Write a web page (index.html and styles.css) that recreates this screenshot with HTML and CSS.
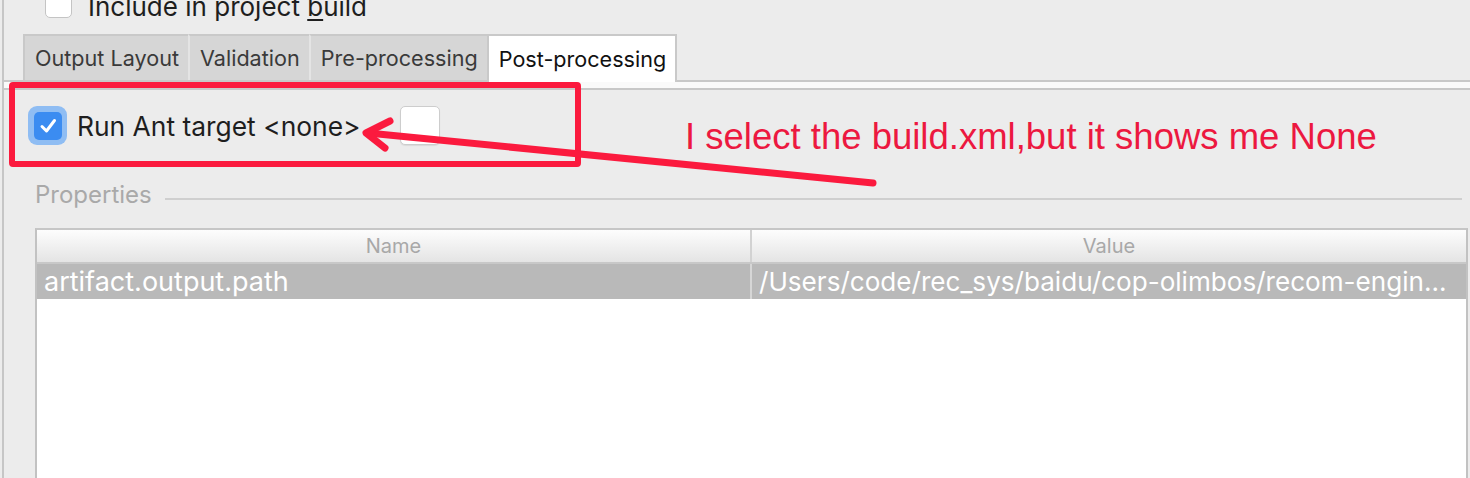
FILE: index.html
```html
<!DOCTYPE html>
<html>
<head>
<meta charset="utf-8">
<link rel="stylesheet" href="styles.css">
</head>
<body>
<div class="page">
  <div class="frame">
    <div class="top-row">
      <span class="cb-plain"></span>
      <span class="lbl top-lbl">Include in project <u>b</u>uild</span>
    </div>
    <div class="tabs">
      <div class="tab first">Output Layout</div>
      <div class="tab">Validation</div>
      <div class="tab">Pre-processing</div>
      <div class="tab active">Post-processing</div>
    </div>
    <div class="strip"></div>
    <div class="panel">
      <div class="ant-row">
        <span class="cb-ring"><span class="cb-checked"><svg width="28" height="28" viewBox="0 0 28 28"><path d="M8 14.5 L12.5 19 L20.5 8.5" fill="none" stroke="#fff" stroke-width="3" stroke-linecap="round" stroke-linejoin="round"/></svg></span></span>
        <span class="lbl">Run Ant target &lt;none&gt;</span>
        <span class="combo"></span>
      </div>
      <div class="props">
        <span class="props-title">Properties</span>
        <span class="props-line"></span>
      </div>
      <div class="table">
        <div class="thead">
          <div class="th">Name</div>
          <div class="th th-last">Value</div>
        </div>
        <div class="tr">
          <div class="td">artifact.output.path</div>
          <div class="td td-last">/Users/code/rec_sys/baidu/cop-olimbos/recom-engin...</div>
        </div>
        <div class="tbody"></div>
      </div>
    </div>
  </div>

  <div class="annot-box"></div>
  <svg class="annot-arrow" width="1470" height="478" viewBox="0 0 1470 478">
    <g fill="none" stroke="#fb1a3e" stroke-width="7" stroke-linecap="round" stroke-linejoin="round">
      <path d="M873 183 L368 133"/>
      <path d="M390 121 L366 133 L385 148"/>
    </g>
  </svg>
  <div class="annot-text">I select the build.xml,but it shows me None</div>
</div>
</body>
</html>
```

FILE: styles.css
```css
html, body {
  margin: 0;
  padding: 0;
}
body {
  background: #ececec;
  font-family: "Inter", "Liberation Sans", sans-serif;
  overflow: hidden;
}
.page {
  position: relative;
  width: 1470px;
  height: 478px;
  overflow: hidden;
}
.frame {
  margin-left: 2px;
  border-left: 2px solid #c6c6c6;
  height: 478px;
  display: flex;
  flex-direction: column;
}
.top-row {
  height: 34px;
  display: flex;
  align-items: flex-start;
  padding-left: 41px;
  gap: 16px;
}
.cb-plain {
  width: 25px;
  height: 25px;
  margin-top: -9px;
  background: #fff;
  border: 1px solid #c4c4c4;
  border-radius: 5px;
  flex: none;
}
.lbl {
  font-size: 26px;
  color: #1e1e1e;
  white-space: nowrap;
}
.top-lbl {
  line-height: 30px;
  margin-top: -8px;
}
.top-lbl u {
  text-decoration-thickness: 2px;
  text-underline-offset: 3px;
}
.tabs {
  display: flex;
  height: 46px;
  padding-left: 19px;
  border-bottom: 2px solid #c8c8c8;
}
.tab {
  background: #d6d6d6;
  border-top: 2px solid #c9c9c9;
  border-left: 2px solid #e4e4e4;
  padding: 0 9px 0 10px;
  font-size: 21.6px;
  line-height: 44px;
  color: #3a3a3a;
  white-space: nowrap;
}
.tab.first {
  border-left-color: #c9c9c9;
}
.tab.active {
  background: #fff;
  border: 2px solid #c9c9c9;
  border-bottom: none;
  margin-bottom: -2px;
  line-height: 46px;
  color: #111;
}
.strip {
  height: 6px;
  background: #fafafa;
  border-bottom: 2px solid #c8c8c8;
}
.panel {
  flex: 1;
  display: flex;
  flex-direction: column;
  min-height: 0;
}
.ant-row {
  display: flex;
  align-items: center;
  margin-top: 16px;
  padding-left: 24px;
  height: 39px;
}
.ant-row .lbl {
  font-size: 26.4px;
}
.cb-ring {
  width: 39px;
  height: 39px;
  box-sizing: border-box;
  border-radius: 9px;
  background: #8fbdf3;
  display: flex;
  align-items: center;
  justify-content: center;
  flex: none;
  margin-right: 10px;
}
.cb-checked {
  width: 28px;
  height: 28px;
  border-radius: 5px;
  background: #3b8cf1;
  display: flex;
}
.combo {
  width: 38px;
  height: 37px;
  margin-left: 40px;
  background: #fff;
  border: 1px solid #cdcdcd;
  border-radius: 5px;
  box-shadow: 0 1px 1px rgba(0,0,0,0.08);
}
.props {
  display: flex;
  align-items: center;
  height: 28px;
  margin-top: 35px;
  padding-left: 31px;
  padding-right: 8px;
}
.props-title {
  font-size: 24px;
  color: #a9a9a9;
  white-space: nowrap;
}
.props-line {
  flex: 1;
  height: 2px;
  background: #cfcfcf;
  margin-left: 13px;
  margin-top: 10px;
}
.table {
  flex: 1;
  margin: 20px 2px 0 31px;
  border-left: 2px solid #c2c2c2;
  border-right: 2px solid #c2c2c2;
  border-top: 2px solid #c6c6c6;
  background: #fff;
  display: flex;
  flex-direction: column;
}
.thead {
  display: grid;
  grid-template-columns: 715px 1fr;
  height: 32px;
  background: linear-gradient(#fdfdfd, #e4e4e4);
  border-bottom: 2px solid #c8c8c8;
}
.th {
  text-align: center;
  font-size: 20px;
  line-height: 32px;
  color: #a8a8a8;
  border-right: 2px solid #d2d2d2;
}
.th-last {
  border-right: none;
}
.tr {
  display: grid;
  grid-template-columns: 715px 1fr;
  height: 35px;
  background: #b9b9b9;
}
.td {
  font-size: 27px;
  line-height: 35px;
  color: #fff;
  padding-left: 7px;
  white-space: nowrap;
  overflow: hidden;
  border-right: 2px solid #d6d6d6;
}
.td-last {
  font-size: 26.1px;
  border-right: none;
}
.tbody {
  flex: 1;
  background: #fff;
}
.annot-box {
  position: absolute;
  left: 9px;
  top: 82px;
  width: 560px;
  height: 73px;
  border: 6px solid #fb1a3e;
  border-radius: 4px;
}
.annot-arrow {
  position: absolute;
  left: 0;
  top: 0;
}
.annot-text {
  position: absolute;
  left: 685px;
  top: 117px;
  font-family: "Liberation Sans", sans-serif;
  font-size: 36.5px;
  line-height: 40px;
  color: #ec1840;
  white-space: nowrap;
}
```
